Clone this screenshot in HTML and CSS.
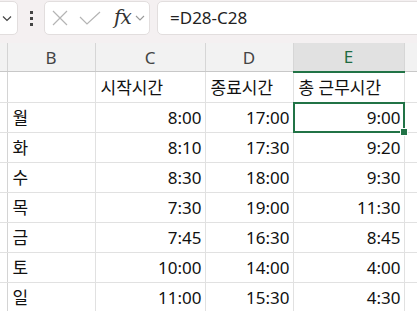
FILE: index.html
```html
<!DOCTYPE html>
<html lang="ko">
<head>
    <meta charset="UTF-8">
    <title>근무시간</title>
    <link rel="stylesheet" href="styles.css">
</head>
<body>

<div class="toolbar">
    <div class="namebox">
        <svg width="10" height="7" viewBox="0 0 10 7"><path d="M1 1.5 L5 5.5 L9 1.5" fill="none" stroke="#444" stroke-width="1.2"/></svg>
    </div>
    <div class="dots"><span></span><span></span><span></span></div>
    <div class="fxbox">
        <svg class="ico" width="16" height="16" viewBox="0 0 16 16"><path d="M1 1 L15 15 M15 1 L1 15" stroke="#b4b4b4" stroke-width="1.2"/></svg>
        <svg class="ico" width="22" height="14" viewBox="0 0 22 14"><path d="M1 6 L8 13 L21 1" fill="none" stroke="#b4b4b4" stroke-width="1.2"/></svg>
        <span class="fx">fx</span>
        <svg width="10" height="6" viewBox="0 0 10 6"><path d="M1 1 L5 5 L9 1" fill="none" stroke="#999" stroke-width="1.1"/></svg>
    </div>
    <div class="formula">=D28-C28</div>
</div>

<!-- 시트 영역 -->
<table class="sheet">
    <colgroup>
        <col class="c-row">
        <col class="c-b">
        <col class="c-c">
        <col class="c-d">
        <col class="c-e">
        <col class="c-f">
    </colgroup>
    <tr class="colhead">
        <th></th><th>B</th><th>C</th><th>D</th><th class="active">E</th><th></th>
    </tr>
    <tr>
        <td></td><td></td><td>시작시간</td><td>종료시간</td><td>총 근무시간</td><td></td>
    </tr>
    <tr>
        <td></td><td>월</td><td class="num">8:00</td><td class="num">17:00</td><td class="num selected">9:00</td><td></td>
    </tr>
    <tr>
        <td></td><td>화</td><td class="num">8:10</td><td class="num">17:30</td><td class="num">9:20</td><td></td>
    </tr>
    <tr>
        <td></td><td>수</td><td class="num">8:30</td><td class="num">18:00</td><td class="num">9:30</td><td></td>
    </tr>
    <tr>
        <td></td><td>목</td><td class="num">7:30</td><td class="num">19:00</td><td class="num">11:30</td><td></td>
    </tr>
    <tr>
        <td></td><td>금</td><td class="num">7:45</td><td class="num">16:30</td><td class="num">8:45</td><td></td>
    </tr>
    <tr>
        <td></td><td>토</td><td class="num">10:00</td><td class="num">14:00</td><td class="num">4:00</td><td></td>
    </tr>
    <tr>
        <td></td><td>일</td><td class="num">11:00</td><td class="num">15:30</td><td class="num">4:30</td><td></td>
    </tr>
    <tr>
        <td></td><td></td><td></td><td></td><td></td><td class="corner-mark"></td>
    </tr>
</table>

</body>
</html>
```

FILE: styles.css
```css
body {
    margin: 0;
    font-family: "Noto Sans", "Noto Sans CJK KR", sans-serif;
    background: #fff;
    overflow: hidden;
    width: 417px;
    height: 311px;
}
.toolbar {
    display: flex;
    align-items: flex-start;
    height: 43px;
    padding-top: 1px;
    box-sizing: border-box;
    background-color: #f4f0f1;
}
.namebox {
    width: 30px;
    height: 34px;
    margin-left: -12px;
    box-sizing: border-box;
    background: #fff;
    border: 1px solid #e2dede;
    border-radius: 5px;
    display: flex;
    align-items: center;
    justify-content: flex-end;
    padding-right: 5px;
}
.dots {
    width: 26px;
    height: 34px;
    display: flex;
    flex-direction: column;
    align-items: center;
    justify-content: center;
    gap: 3px;
}
.dots span {
    width: 3px;
    height: 3px;
    background: #444;
}
.fxbox {
    width: 106px;
    height: 34px;
    box-sizing: border-box;
    background: #fff;
    border: 1px solid #e2dede;
    border-radius: 5px;
    display: flex;
    align-items: center;
    padding-left: 7px;
}
.fxbox .ico {
    margin-right: 11px;
}
.fx {
    font-family: "DejaVu Serif", "Liberation Serif", serif;
    font-style: italic;
    font-weight: normal;
    font-size: 20px;
    color: #333;
    margin: -3px 4px 0 2px;
    letter-spacing: -1px;
}
.formula {
    flex: 1;
    height: 34px;
    margin-left: 7px;
    margin-right: -10px;
    box-sizing: border-box;
    background: #fff;
    border: 1px solid #e2dede;
    border-radius: 5px;
    padding-left: 12px;
    font-size: 17px;
    line-height: 32px;
    color: #222;
}

/* 시트 */
.sheet {
    border-collapse: collapse;
    table-layout: fixed;
    width: 430px;
    font-size: 17px;
    color: #111;
}
.c-row { width: 7px; }
.c-b { width: 88px; }
.c-c { width: 110px; }
.c-d { width: 88px; }
.c-e { width: 111px; }
.c-f { width: 26px; }
.sheet td, .sheet th {
    height: 28px;
    padding: 1px 4px 0 5px;
    border: 1px solid #e1e1e1;
    border-top: none;
    line-height: 27px;
    white-space: nowrap;
    overflow: visible;
    text-align: left;
}
.sheet td:first-child, .sheet th:first-child {
    padding: 0;
    border-left: none;
    border-right-color: #d4d4d4;
}
.colhead th {
    background: #f2f2f2;
    font-weight: normal;
    color: #444;
    text-align: center;
    border-right-color: #d6d6d6;
    border-left-color: #d6d6d6;
    border-bottom: 1px solid #c8c8c8;
    padding: 0;
}
.colhead th.active {
    background: #e1e1e1;
    color: #1e6b41;
    border-bottom: 2px solid #217346;
    height: 27px;
}
.sheet td.num {
    text-align: right;
    padding-right: 3px;
}
.sheet td.selected, .sheet td.corner-mark {
    position: relative;
}
.sheet td.selected::after {
    content: "";
    position: absolute;
    left: -1px;
    top: -1px;
    right: -1px;
    bottom: -1px;
    border: 2px solid #217346;
}
.sheet td.selected::before {
    content: "";
    position: absolute;
    right: -4px;
    bottom: -4px;
    width: 6px;
    height: 6px;
    background: #217346;
    border: 1px solid #fff;
    z-index: 1;
}
/* 오른쪽 아래 작은 상자 */
.sheet td.corner-mark::after {
    content: "";
    position: absolute;
    left: 1px;
    top: 1px;
    width: 14px;
    height: 14px;
    border: 1px solid #c4c4c4;
    background: #fff;
}
```
